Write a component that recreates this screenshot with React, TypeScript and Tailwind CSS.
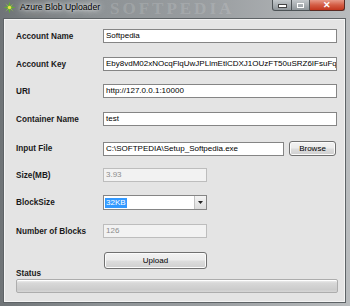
import React from 'react';

const FONT = '"Liberation Sans", Arial, sans-serif';

// textbox in Win7 style
const TextBox: React.FC<{ value: string; width: string; disabled?: boolean }> = ({ value, width, disabled }) => (
  <div
    className={`${width} h-[14px] border px-[2px] flex items-center overflow-hidden whitespace-nowrap text-[8px] leading-none ${
      disabled ? 'bg-[#f2f2f2] border-[#bdbdbd] text-[#8c8c8c]' : 'bg-white border-[#858585] text-black'
    }`}
  >
    {value}
  </div>
);

const WinButton: React.FC<{ label: string; className: string }> = ({ label, className }) => (
  <div
    className={`${className} border border-[#707070] rounded-[3px] flex items-center justify-center text-[8px] text-black shadow-[inset_0_0_0_1px_#fbfbfb] bg-[linear-gradient(#f2f2f2_0%,#ebebeb_48%,#dddddd_52%,#cfcfcf_100%)]`}
  >
    {label}
  </div>
);

const Label: React.FC<{ text: string }> = ({ text }) => (
  <div className="w-[87px] shrink-0 text-[8.2px] font-bold text-[#1a1a1a] leading-none pt-[2px]">{text}</div>
);

const AppIcon = () => (
  <svg width="13" height="13" viewBox="0 0 12 12">
    <path d="M6 0.5 L7.2 4.8 L11.5 6 L7.2 7.2 L6 11.5 L4.8 7.2 L0.5 6 L4.8 4.8 Z" fill="#5fae2e" />
    <path d="M2 2 L5 4.6 L4.6 5 Z M10 2 L7 4.6 L7.4 5 Z M2 10 L5 7.4 L4.6 7 Z M10 10 L7 7.4 L7.4 7 Z" fill="#9bd24a" />
    <circle cx="6" cy="6" r="1.6" fill="#e8e04a" />
  </svg>
);

export default function App() {
  return (
    <div
      className="w-[350px] h-[306px] flex flex-col overflow-hidden bg-[linear-gradient(90deg,#6f7477_0%,#8e9396_30%,#9a9ea1_60%,#b9bcbe_100%)]"
      style={{ fontFamily: FONT }}
    >
      {/* title bar */}
      <div className="h-[19px] shrink-0 flex items-start relative">
        <div className="ml-[3px] mt-[1px]">
          <AppIcon />
        </div>
        <div className="ml-[4px] mt-[2px] text-[8.7px] leading-[10px] text-black [text-shadow:0_0_3px_#dfe1e2,0_0_6px_#dfe1e2,0_0_9px_#d2d4d5]">
          Azure Blob Uploader
        </div>
        <div
          className="absolute left-[110px] top-0 text-[17px] font-bold tracking-[3px] text-white/15 leading-none"
          style={{ fontFamily: '"Liberation Serif", serif' }}
        >
          SOFTPEDIA
        </div>
        {/* caption buttons */}
        <div className="ml-auto mr-[5px] flex h-[11px]">
          <div className="w-[20px] h-full border border-[#4d5356] border-t-0 rounded-bl-[3px] bg-[linear-gradient(#c3c8cb,#8f969a)] flex items-end justify-center pb-[2px]">
            <div className="w-[7px] h-[2px] bg-white border border-[#444] box-content" />
          </div>
          <div className="w-[18px] h-full border-b border-r border-[#4d5356] bg-[linear-gradient(#c3c8cb,#8f969a)] flex items-center justify-center">
            <div className="w-[7px] h-[5px] border border-white" />
          </div>
          <div className="w-[35px] h-full border-b border-r border-[#5a2a22] rounded-br-[3px] bg-[linear-gradient(#e79a88_0%,#d45d45_50%,#c2361d_100%)] flex items-center justify-center text-white text-[9px] font-bold leading-none">
            ✕
          </div>
        </div>
      </div>

      {/* client area */}
      <div className="ml-[4px] mr-[5px] mb-[4px] flex-1 bg-[#e4e4e4] border border-[#f4f4f4] shadow-[0_0_0_1px_#5e6366] flex flex-col pl-[11px] pt-[9px]">
        <div className="flex items-center h-[14px]">
          <Label text="Account Name" />
          <TextBox value="Softpedia" width="w-[234px]" />
        </div>
        <div className="flex items-center h-[14px] mt-[14px]">
          <Label text="Account Key" />
          <TextBox
            value="Eby8vdM02xNOcqFlqUwJPLlmEtlCDXJ1OUzFT50uSRZ6IFsuFq2UVErCz4I6tq/K1SZFPTOtr/KBHBeksoGMGw=="
            width="w-[234px]"
          />
        </div>
        <div className="flex items-center h-[14px] mt-[13px]">
          <Label text="URI" />
          <TextBox value="http://127.0.0.1:10000" width="w-[234px]" />
        </div>
        <div className="flex items-center h-[14px] mt-[14px]">
          <Label text="Container Name" />
          <TextBox value="test" width="w-[234px]" />
        </div>
        <div className="flex items-center h-[15px] mt-[15px]">
          <Label text="Input File" />
          <TextBox value="C:\SOFTPEDIA\Setup_Softpedia.exe" width="w-[181px]" />
          <WinButton label="Browse" className="ml-[5px] w-[47px] h-[15px]" />
        </div>
        <div className="flex items-center h-[14px] mt-[12px]">
          <Label text="Size(MB)" />
          <TextBox value="3.93" width="w-[104px]" disabled />
        </div>
        <div className="flex items-center h-[15px] mt-[13px]">
          <Label text="BlockSize" />
          <div className="w-[104px] h-[15px] border border-[#858585] bg-white flex items-stretch">
            <div className="flex-1 flex items-center pl-[1px]">
              <span className="bg-[#3399ff] text-white text-[8px] leading-[10px] px-[1px]">32KB</span>
            </div>
            <div className="w-[12px] border-l border-[#c2c2c2] bg-[linear-gradient(#f4f4f4,#dcdcdc)] flex items-center justify-center">
              <svg width="5" height="3" viewBox="0 0 5 3">
                <path d="M0 0 H5 L2.5 3 Z" fill="#222" />
              </svg>
            </div>
          </div>
        </div>
        <div className="flex items-center h-[14px] mt-[14px]">
          <Label text="Number of Blocks" />
          <TextBox value="126" width="w-[104px]" disabled />
        </div>
        <div className="flex h-[17px] mt-[14px]">
          <div className="w-[88px]" />
          <WinButton label="Upload" className="w-[103px] h-[17px]" />
        </div>
        <div className="h-[9px] flex items-end text-[8.2px] font-bold text-[#1a1a1a] leading-none">Status</div>
        <div className="mt-[1px] w-[322px] h-[14px] border border-[#adadad] rounded-[2px] bg-[linear-gradient(#f3f3f3_0%,#d8d8d8_25%,#cccccc_80%,#d6d6d6_100%)] shadow-[inset_0_1px_0_#ffffff]" />
      </div>
    </div>
  );
}
